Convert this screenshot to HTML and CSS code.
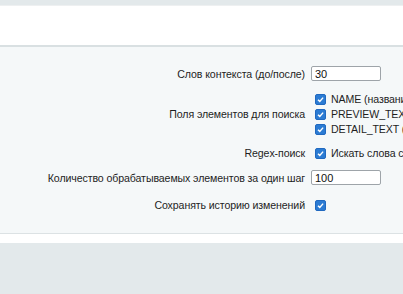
FILE: index.html
```html
<!DOCTYPE html>
<html lang="ru">
<head>
    <meta charset="UTF-8">
    <title>Настройки поиска</title>
    <link rel="stylesheet" href="styles.css">
</head>
<body>
    <div class="top-strip"></div>
    <div class="tabs-bar"></div>

    <!-- форма настроек -->
    <div class="edit-panel">
        <div class="form-row">
            <div class="field-label">Слов контекста (до/после)</div>
            <div class="field-value">
                <input class="text-input" type="text" value="30">
            </div>
        </div>

        <div class="form-row">
            <div class="field-label">Поля элементов для поиска</div>
            <div class="field-value option-list">
                <label class="option"><span class="check"><svg viewBox="0 0 10 10"><path d="M2.2 5.2 4.2 7.1 7.9 2.9"/></svg></span>NAME (название)</label>
                <label class="option"><span class="check"><svg viewBox="0 0 10 10"><path d="M2.2 5.2 4.2 7.1 7.9 2.9"/></svg></span>PREVIEW_TEXT (анонс)</label>
                <label class="option"><span class="check"><svg viewBox="0 0 10 10"><path d="M2.2 5.2 4.2 7.1 7.9 2.9"/></svg></span>DETAIL_TEXT (детальное описание)</label>
            </div>
        </div>

        <div class="form-row">
            <div class="field-label">Regex-поиск</div>
            <div class="field-value">
                <label class="option"><span class="check"><svg viewBox="0 0 10 10"><path d="M2.2 5.2 4.2 7.1 7.9 2.9"/></svg></span>Искать слова с помощью регулярных выражений</label>
            </div>
        </div>

        <div class="form-row">
            <div class="field-label">Количество обрабатываемых элементов за один шаг</div>
            <div class="field-value">
                <input class="text-input" type="text" value="100">
            </div>
        </div>

        <div class="form-row last-row">
            <div class="field-label">Сохранять историю изменений</div>
            <div class="field-value">
                <label class="option"><span class="check"><svg viewBox="0 0 10 10"><path d="M2.2 5.2 4.2 7.1 7.9 2.9"/></svg></span></label>
            </div>
        </div>
    </div>

    <div class="panel-footer"></div>
</body>
</html>
```

FILE: styles.css
```css
body {
    margin: 0;
    padding: 0;
    background-color: #e3e9eb;
    font-family: "Liberation Sans", Arial, sans-serif;
    font-size: 10.6px;
    letter-spacing: -0.1px;
    color: #1e1e1e;
    overflow: hidden;
}
.top-strip {
    height: 5px;
    background-color: #e3e9eb;
    border-bottom: 1px solid #eef0f1;
}
.tabs-bar {
    height: 39px;
    background-color: #fff;
    border-bottom: 2px solid #d9e0e2;
}
/* форма */
.edit-panel {
    background-color: #f5f8f9;
    padding: 14px 0 16px;
    border-bottom: 1px solid #dce2e4;
}
.form-row {
    display: flex;
    align-items: center;
    padding: 5px 0;
}
.form-row.last-row {
    margin-top: 3px;
}
.field-label {
    flex: 0 0 305px;
    text-align: right;
    white-space: nowrap;
}
.field-value {
    padding-left: 6px;
    white-space: nowrap;
}
.option-list {
    display: flex;
    flex-direction: column;
    gap: 1px;
    padding-top: 1px;
}
.option {
    display: flex;
    align-items: center;
    height: 14px;
    padding-left: 4px;
}
.check {
    display: inline-block;
    width: 9px;
    height: 9px;
    margin-right: 5px;
    background-color: #2b7bd3;
    border: 1px solid #2069c0;
    border-radius: 2px;
}
.check svg {
    display: block;
    width: 9px;
    height: 9px;
    fill: none;
    stroke: #fff;
    stroke-width: 1.6;
}
.text-input {
    box-sizing: border-box;
    width: 70px;
    height: 15px;
    padding: 0 3px;
    border: 1px solid #9ea4a9;
    border-radius: 2px;
    background-color: #fff;
    font-family: inherit;
    font-size: 11px;
    color: #111;
    outline: none;
}
.panel-footer {
    height: 9px;
    background-color: #fff;
}
```
